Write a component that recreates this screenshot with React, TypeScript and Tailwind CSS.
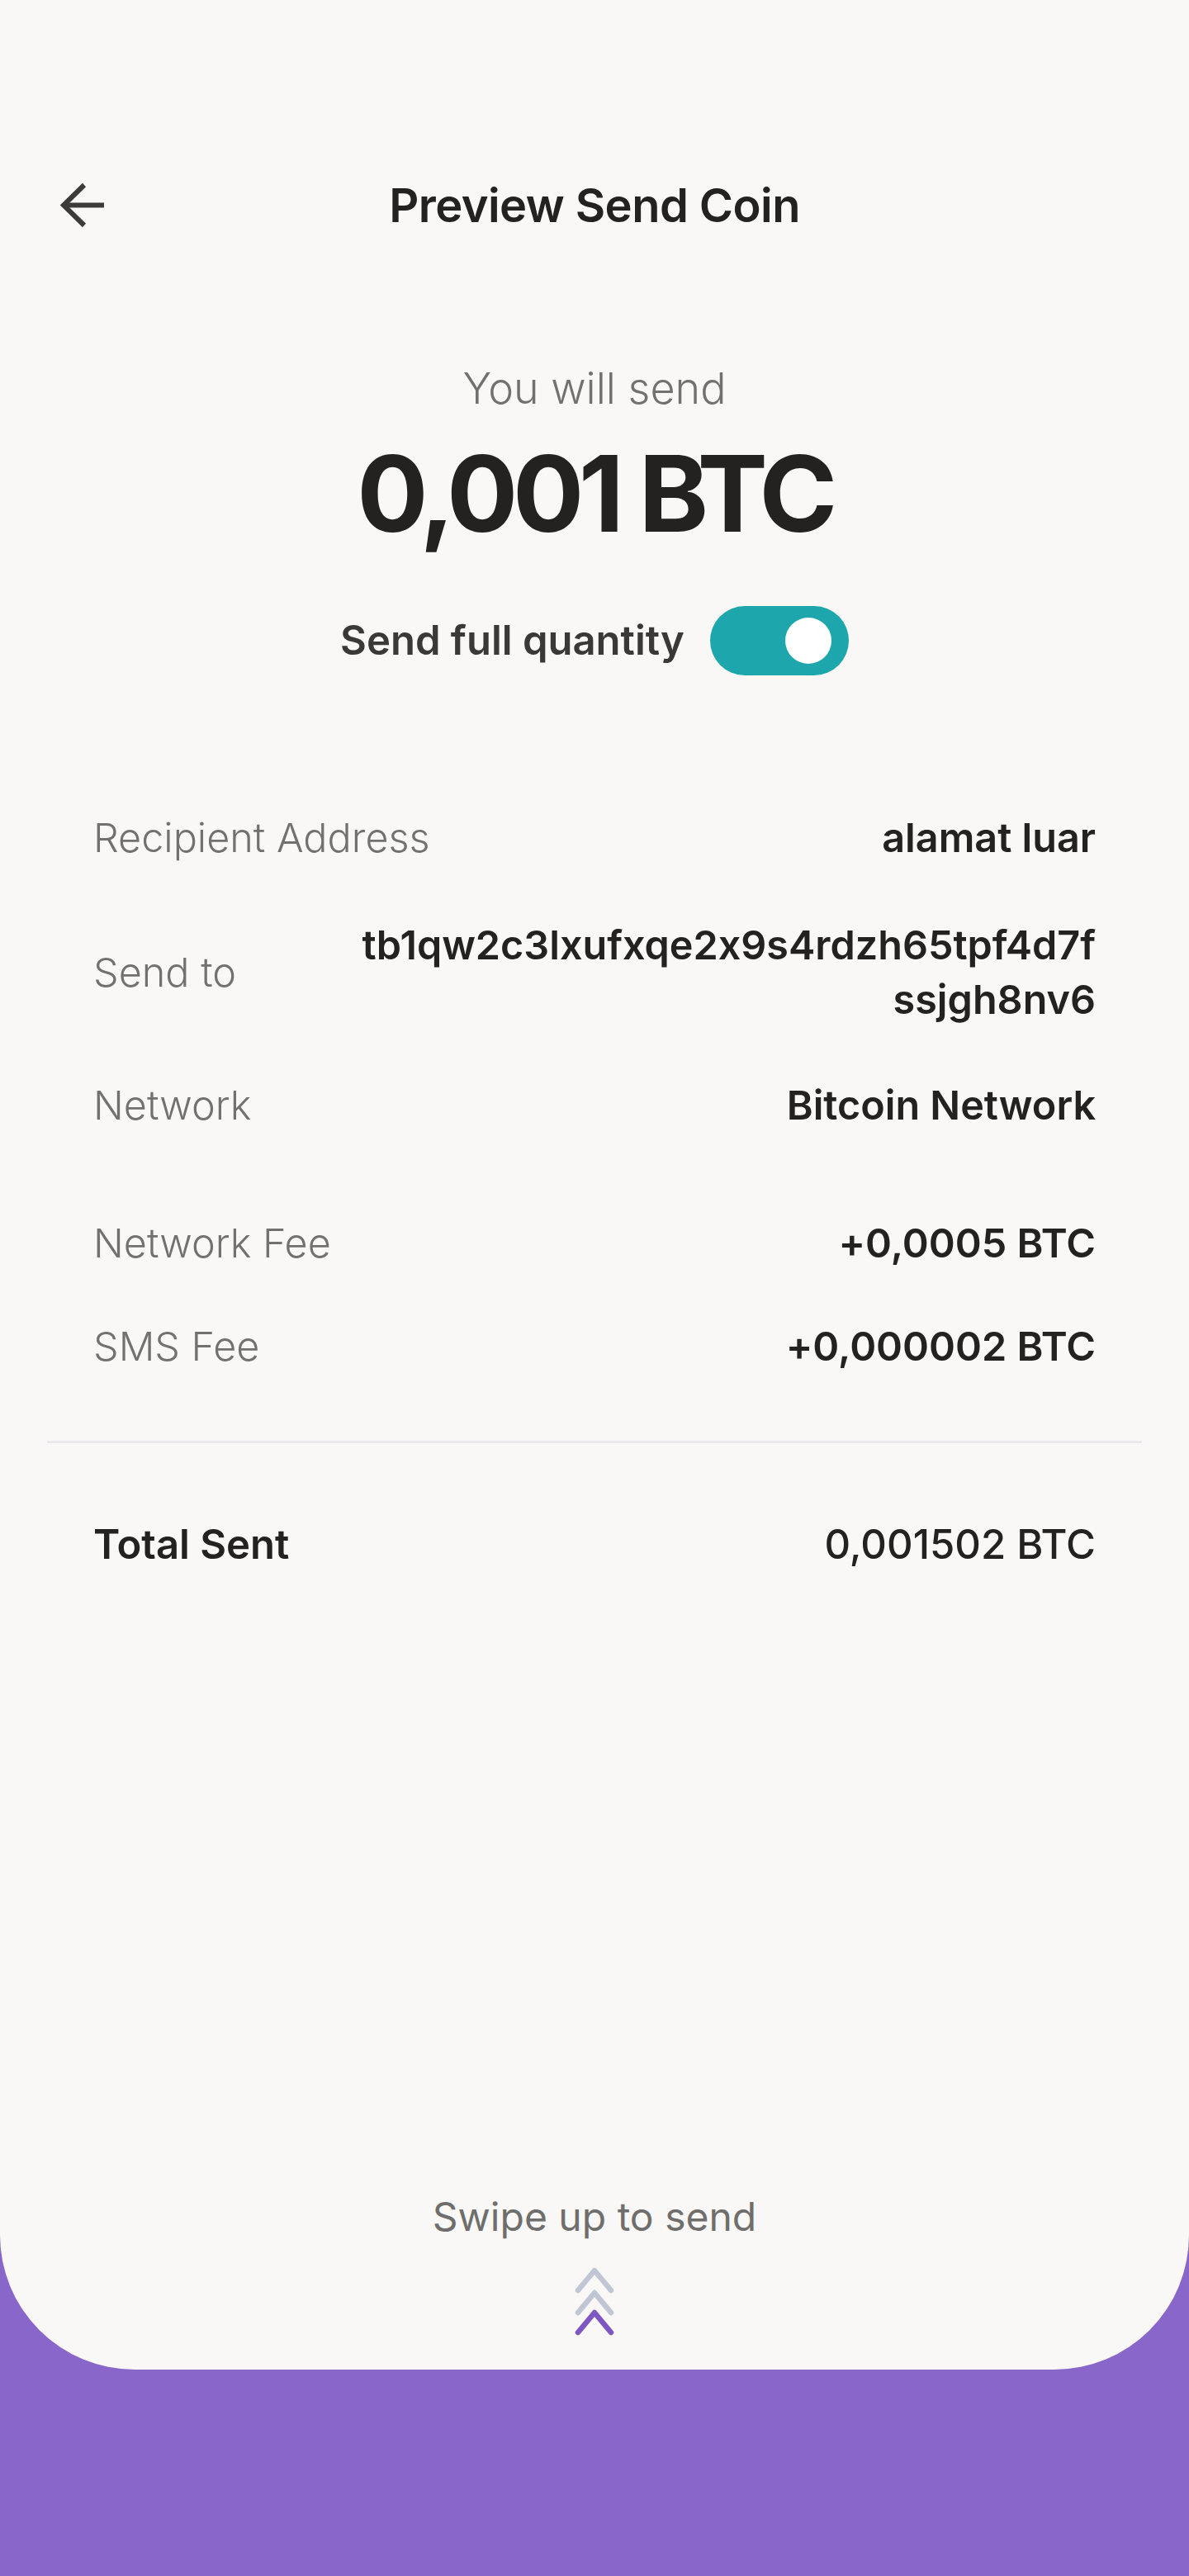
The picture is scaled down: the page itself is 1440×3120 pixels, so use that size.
import React from 'react';

interface DetailRowProps {
  label: string;
  value: React.ReactNode;
  strong?: boolean;
}

function DetailRow({ label, value, strong }: DetailRowProps) {
  return (
    <div className="flex items-center justify-between gap-8">
      <span
        className={
          strong
            ? 'text-[49px] leading-[66px] font-semibold text-[#232220] shrink-0'
            : 'text-[48.5px] leading-[66px] font-light text-[#727170] shrink-0'
        }
      >
        {label}
      </span>
      <div
        className={
          strong
            ? 'text-[49px] leading-[66px] font-medium text-[#232220] text-right'
            : 'text-[48.5px] leading-[66px] font-semibold text-[#232220] text-right'
        }
      >
        {value}
      </div>
    </div>
  );
}

function BackArrow() {
  return (
    <svg width="56" height="56" viewBox="0 0 56 56" fill="none">
      <path d="M56 27.5H6" stroke="#3d3b39" strokeWidth="6" />
      <path d="M32 3L7 27.5L32 52" stroke="#3d3b39" strokeWidth="6" />
    </svg>
  );
}

function SwipeChevrons() {
  return (
    <svg width="50" height="84" viewBox="0 0 50 84" fill="none" strokeLinecap="round" strokeLinejoin="round" strokeWidth="6.5">
      <path d="M5 29L25 5L45 29" stroke="#c0c6d3" />
      <path d="M5 56L25 32L45 56" stroke="#c0c6d3" />
      <path d="M5 80L25 56L45 80" stroke="#7e57c2" />
    </svg>
  );
}

export default function App() {
  return (
    <div className="min-h-[3120px] w-full bg-[#8967ca] font-[Inter,'Noto_Sans',sans-serif] [font-feature-settings:'calt'_0]">
      <div className="flex h-[2870px] flex-col rounded-b-[163px] bg-[#f9f8f6]">
        {/* header */}
        <div className="mt-[189px] grid h-[120px] grid-cols-[56px_1fr_56px] items-center px-[70px]">
          <BackArrow />
          <h1 className="text-center text-[56px] font-semibold tracking-[-0.01em] text-[#232220]">
            Preview Send Coin
          </h1>
          <span />
        </div>

        {/* amount */}
        <div className="mt-[132px] flex flex-col items-center">
          <p className="text-[52px] leading-[60px] font-light text-[#727170]">You will send</p>
          <p className="mt-[33px] h-[128px] text-[128px] leading-none font-bold tracking-[-0.05em] text-[#232220]">
            0,001 BTC
          </p>
          <div className="mt-[72px] flex items-center gap-[31px]">
            <span className="text-[49px] font-semibold text-[#3a3937]">Send full quantity</span>
            <div className="flex h-[84px] w-[168px] items-center justify-end rounded-full bg-[#1da7ac] pr-[21px]">
              <div className="h-[56px] w-[56px] rounded-full bg-white" />
            </div>
          </div>
        </div>

        {/* details */}
        <div className="mt-[164px] flex flex-col px-[113px]">
          <DetailRow label="Recipient Address" value="alamat luar" />
          <div className="mt-[64px]">
            <DetailRow
              label="Send to"
              value={
                <>
                  <div>tb1qw2c3lxufxqe2x9s4rdzh65tpf4d7f</div>
                  <div>ssjgh8nv6</div>
                </>
              }
            />
          </div>
          <div className="mt-[62px]">
            <DetailRow label="Network" value="Bitcoin Network" />
          </div>
          <div className="mt-[101px]">
            <DetailRow label="Network Fee" value="+0,0005 BTC" />
          </div>
          <div className="mt-[59px]">
            <DetailRow label="SMS Fee" value="+0,000002 BTC" />
          </div>
        </div>

        <div className="mx-[57px] mt-[81px] h-[3px] bg-[#e9e9ee]" />

        <div className="mt-[90px] px-[113px]">
          <DetailRow label="Total Sent" value="0,001502 BTC" strong />
        </div>

        <div className="flex-1" />

        {/* swipe hint */}
        <div className="flex flex-col items-center pb-[41px]">
          <p className="text-[48px] leading-[60px] text-[#6f6e6c]">Swipe up to send</p>
          <div className="mt-[30px]">
            <SwipeChevrons />
          </div>
        </div>
      </div>
    </div>
  );
}
